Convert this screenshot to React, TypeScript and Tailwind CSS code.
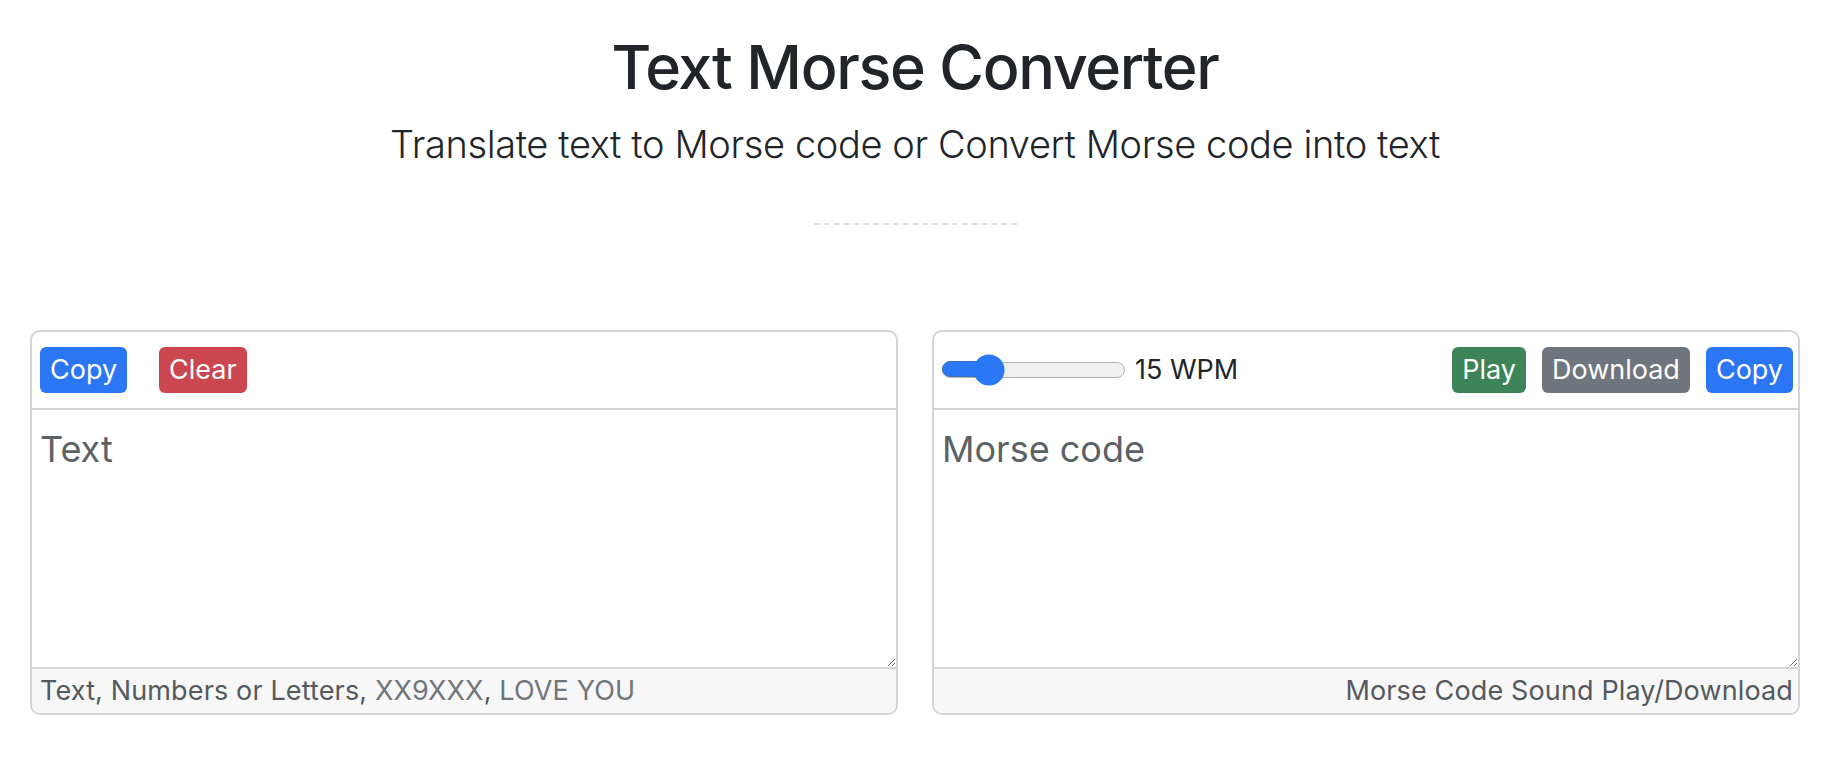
import { useState } from "react";

function Btn({ color, children }: { color: string; children: React.ReactNode }) {
	return (
		<button
			type="button"
			className={`h-[46px] rounded-[6px] px-[10px] text-[27px] leading-none text-white ${color}`}
		>
			{children}
		</button>
	);
}

function SpeedSlider({ wpm }: { wpm: number }) {
	// thumb travels over track width minus its own size, 5..55 wpm
	const ratio = (wpm - 5) / 50;
	const left = 15.5 + ratio * (183 - 31);
	return (
		<div className="flex items-center gap-[10px]">
			<div className="relative h-[16px] w-[183px] rounded-full border-[1.5px] border-[#b3b3b3] bg-[#efefef]">
				<div
					className="absolute -left-[1.5px] -top-[1.5px] h-[16px] rounded-l-full border-[1.5px] border-[#3f6fb8] bg-[#2a78f6]"
					style={{ width: left }}
				/>
				<div
					className="absolute top-1/2 h-[31px] w-[31px] -translate-x-1/2 -translate-y-1/2 rounded-full bg-[#2a78f6]"
					style={{ left }}
				/>
			</div>
			<span className="text-[27px] text-[#212529]">{wpm} WPM</span>
		</div>
	);
}

function Panel({
	header,
	placeholder,
	footer,
	footerRight,
}: {
	header: React.ReactNode;
	placeholder: string;
	footer: React.ReactNode;
	footerRight?: boolean;
}) {
	const [value, setValue] = useState("");
	return (
		<div className="flex flex-col overflow-hidden rounded-[10px] border-2 border-[#d4d4d4] bg-white">
			<div className="flex items-center border-b-2 border-[#d4d4d4] py-[15px] pl-[7px] pr-[5px]">
				{header}
			</div>
			<textarea
				value={value}
				onChange={(e) => setValue(e.target.value)}
				placeholder={placeholder}
				className="h-[257px] w-full px-[8px] pt-[12px] text-[36px] leading-[1.5] text-[#212529] outline-none placeholder:text-[#5c6166]"
			/>
			<div
				className={`border-t-2 border-[#d4d4d4] bg-[#f7f7f7] py-[2px] pl-[8px] pr-[5px] text-[27px] leading-[1.5] tracking-[0.005em] text-[#54595e] ${
					footerRight ? "text-right tracking-[-0.003em]" : ""
				}`}
			>
				{footer}
			</div>
		</div>
	);
}

export default function App() {
	return (
		<main className="min-h-screen bg-white font-['Inter',sans-serif] text-[#212529]">
			<header className="flex flex-col items-center pt-[31px]">
				<h1 className="text-[61px] font-medium leading-[1.2] tracking-[-0.022em]">
					Text Morse Converter
				</h1>
				<p className="mt-[18px] text-[38px] font-light leading-[1.2] tracking-[-0.01em]">
					Translate text to Morse code or Convert Morse code into text
				</p>
				<div className="mt-[55px] w-[203px] border-t-2 border-dashed border-[#e0e0e0]" />
			</header>

			<section className="mt-[105px] grid grid-cols-2 gap-[34px] px-[30px]">
				<Panel
					placeholder="Text"
					header={
						<div className="flex gap-[32px] pl-[1px]">
							<Btn color="bg-[#2a76f5]">Copy</Btn>
							<Btn color="bg-[#cc4650]">Clear</Btn>
						</div>
					}
					footer={
						<>
							Text, Numbers or Letters,{" "}
							<span className="text-[#70767d]">XX9XXX</span>,{" "}
							<span className="text-[#70767d]">LOVE YOU</span>
						</>
					}
				/>
				<Panel
					placeholder="Morse code"
					footerRight
					header={
						<div className="flex w-full items-center pl-[1px]">
							<SpeedSlider wpm={15} />
							<div className="ml-auto flex gap-[16px]">
								<Btn color="bg-[#3d8558]">Play</Btn>
								<Btn color="bg-[#6f757c]">Download</Btn>
								<Btn color="bg-[#2a76f5]">Copy</Btn>
							</div>
						</div>
					}
					footer="Morse Code Sound Play/Download"
				/>
			</section>
		</main>
	);
}
